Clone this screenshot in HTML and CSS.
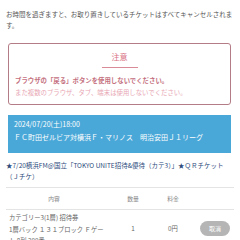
FILE: index.html
```html
<!DOCTYPE html>
<html lang="ja">
<head>
<meta charset="utf-8">
<link rel="stylesheet" href="styles.css">
</head>
<body>
<p class="lead">お時間を過ぎますと、お取り置きしているチケットはすべてキャンセルされます。</p>
<section class="caution">
  <h2 class="caution-title">注意</h2>
  <p class="caution-strong">ブラウザの「戻る」ボタンを使用しないでください。</p>
  <p class="caution-light">また複数のブラウザ、タブ、端末は使用しないでください。</p>
</section>
<div class="event">
  <div>2024/07/20(土)18:00</div>
  <div>ＦＣ町田ゼルビア対横浜Ｆ・マリノス　明治安田Ｊ１リーグ</div>
</div>
<p class="ticket-name">★7/20横浜FM@国立「TOKYO UNITE招待&amp;優待（カテ3）」★ＱＲチケット（Ｊチケ）</p>
<div class="table">
  <div class="row head">
    <div class="c1">内容</div>
    <div class="c2">数量</div>
    <div class="c3">料金</div>
    <div class="c4"></div>
  </div>
  <div class="row body">
    <div class="c1">カテゴリー3(1層) 招待券<br>1層バック １３１ブロック Ｆゲート 8列 200番</div>
    <div class="c2 mid">1</div>
    <div class="c3 mid">0円</div>
    <div class="c4 mid"><span class="btn">取消</span></div>
  </div>
</div>
</body>
</html>
```
FILE: styles.css
```css
html, body {
  margin: 0;
  padding: 0;
  background: #ffffff;
}
body {
  font-family: "Noto Sans CJK JP", "Noto Sans", sans-serif;
  color: #555555;
  width: 240px;
  overflow: hidden;
}
p, h2 { margin: 0; }
.lead {
  font-size: 6.5px;
  line-height: 11px;
  padding: 9px 6px 0 6px;
  color: #555;
}
.caution {
  margin: 12px 9px 0 8px;
  border: 1.5px solid #b47c86;
  border-radius: 3px;
  padding: 7px 6px 5px 6px;
}
.caution-title {
  font-size: 8px;
  line-height: 12px;
  font-weight: normal;
  color: #d9707f;
  text-align: center;
  width: 36px;
  margin: 0 auto 7px;
  padding-bottom: 4px;
  border-bottom: 1px solid #d98c98;
}
.caution-strong {
  font-size: 6.4px;
  line-height: 12px;
  font-weight: bold;
  color: #c4707e;
}
.caution-light {
  font-size: 6.4px;
  line-height: 12px;
  color: #e8a6b4;
}
.event {
  margin: 10px 9px 0 8px;
  background: #4aa8d8;
  color: #ffffff;
  font-size: 7px;
  line-height: 13px;
  padding: 3px 6px 9px 6px;
}
.ticket-name {
  font-size: 6.5px;
  line-height: 11px;
  color: #2c4a7c;
  padding: 7px 4px 0 6px;
}
.table {
  margin: 5px 6px 0 6px;
}
.row {
  display: grid;
  grid-template-columns: 112px 30px 50px 36px;
  font-size: 6.3px;
}
.head {
  border-top: 1px solid #e4e4e4;
  border-bottom: 1px solid #e4e4e4;
  height: 21px;
  align-items: center;
  color: #888;
  font-size: 5.8px;
}
.head .c1 { text-align: center; padding-right: 16px; }
.c2, .c3 { text-align: center; }
.body {
  padding-top: 2px;
  line-height: 11.5px;
  color: #666;
}
.body .c1 { padding: 0 11px 0 3px; }
.mid { padding-top: 11px; }
.btn {
  display: inline-block;
  width: 30px;
  height: 15px;
  line-height: 15px;
  border-radius: 8px;
  background: #b5b5b5;
  color: #ffffff;
  text-align: center;
  font-size: 6px;
  margin-top: -6px;
  margin-left: 2px;
}
```
